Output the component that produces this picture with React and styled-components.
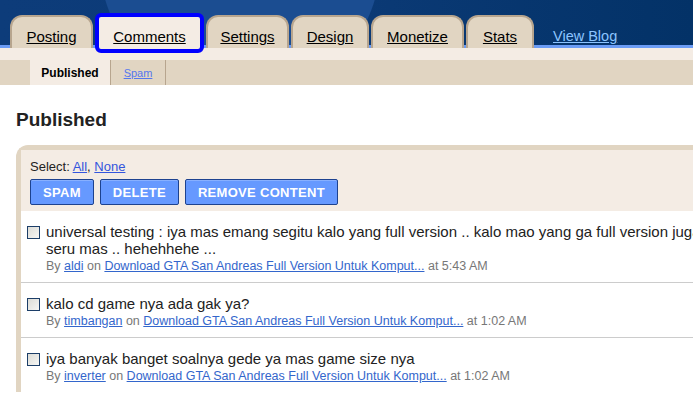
import React from "react";
import styled, { createGlobalStyle } from "styled-components";

const GlobalStyle = createGlobalStyle`
  html, body {
    margin: 0;
    padding: 0;
    background: #ffffff;
    font-family: "Liberation Sans", Arial, sans-serif;
    overflow: hidden;
  }
`;

// tab label + its width in the bar
const TABS = [
  { label: "Posting", w: 83 },
  { label: "Comments", w: 103, active: true },
  { label: "Settings", w: 83 },
  { label: "Design", w: 78 },
  { label: "Monetize", w: 93 },
  { label: "Stats", w: 68 },
];

// each comment is given as its visual lines (first one runs past the window)
const COMMENTS = [
  {
    lines: [
      "universal testing : iya mas emang segitu kalo yang full version .. kalo mao yang ga full version juga ada mas .. cuma ga",
      "seru mas .. hehehhehe ...",
    ],
    author: "aldi",
    time: "5:43 AM",
  },
  { lines: ["kalo cd game nya ada gak ya?"], author: "timbangan", time: "1:02 AM" },
  { lines: ["iya banyak banget soalnya gede ya mas game size nya"], author: "inverter", time: "1:02 AM" },
];

//* --------- header ---------
const Header = styled.div`
  height: 48px;
  display: flex;
  align-items: flex-end;
  padding-left: 10px;
  gap: 2px;
  background:
    radial-gradient(circle at 240px -40px, #1b4d91 0, #1b4d91 140px, transparent 141px),
    linear-gradient(90deg, #0d3c7a 0%, #0b3a76 50%, #033267 100%);
  box-shadow: inset 0 -3px 0 #6b9cf5;
`;

const Tab = styled.a`
  box-sizing: border-box;
  width: ${(p) => p.$w}px;
  height: 33px;
  padding-top: 11px;
  text-align: center;
  background: #e1d5c2;
  border: 2px solid #b7a58e;
  border-bottom: none;
  border-radius: 12px 12px 0 0;
  color: #000;
  font-size: 15px;
  text-decoration: underline;
  white-space: nowrap;
`;

const ActiveTab = styled(Tab)`
  background: #f4ece4;
  border-color: #f4ece4;
  outline: 4px solid #0000ff;
  outline-offset: -1px;
  border-radius: 3px;
  height: 34px;
  margin: 0 3px -2px;
  padding-top: 10px;
`;

const ViewBlog = styled.a`
  color: #8cc4ff;
  font-size: 14.5px;
  text-decoration: underline;
  margin-left: 17px;
  padding-bottom: 4px;
`;

//* --------- sub nav ---------
const Strip = styled.div`
  height: 12px;
  background: #f4ece4;
`;

const SubBar = styled.div`
  height: 25px;
  background: #e1d5c2;
  display: flex;
  padding-left: 30px;
`;

const SubTab = styled.a`
  display: flex;
  align-items: center;
  justify-content: center;
  box-sizing: border-box;
  width: ${(p) => (p.$active ? "81px" : "55px")};
  background: ${(p) => (p.$active ? "#f4ece4" : "transparent")};
  border-right: 1px solid #b7a58e;
  font-size: ${(p) => (p.$active ? "12px" : "11px")};
  font-weight: ${(p) => (p.$active ? "bold" : "normal")};
  color: ${(p) => (p.$active ? "#000" : "#5577ee")};
  text-decoration: ${(p) => (p.$active ? "none" : "underline")};
`;

//* --------- main ---------
const Main = styled.div`
  padding: 0 0 0 16px;
`;

const Title = styled.h2`
  margin: 24px 0 14px;
  font-size: 19px;
  font-weight: bold;
  color: #222;
`;

const Panel = styled.div`
  border-top: 5px solid #e1d5c2;
  border-left: 5px solid #e1d5c2;
  border-top-left-radius: 12px;
`;

const Toolbar = styled.div`
  background: #f4ece4;
  padding: 9px 0 6px 9px;
  display: flex;
  flex-direction: column;
  gap: 5px;
`;

const SelectLine = styled.div`
  font-size: 13px;
  color: #222;
  a {
    color: #3355dd;
    text-decoration: underline;
  }
`;

const Buttons = styled.div`
  display: flex;
  gap: 6px;
`;

const Button = styled.button`
  height: 26px;
  padding: 0 12px;
  background: #6699ff;
  border: 1px solid #1d428f;
  border-radius: 2px;
  color: #fff;
  font-family: "Liberation Sans", Arial, sans-serif;
  font-size: 13px;
  font-weight: bold;
  letter-spacing: 0.3px;
  box-shadow: inset 0 1px 0 #88b0ff;
`;

const Row = styled.div`
  display: flex;
  gap: 6px;
  padding: 12px 0 9px 6px;
  border-bottom: 1px solid #cccccc;
  &:last-child {
    border-bottom: none;
  }
`;

const Check = styled.span`
  flex: none;
  width: 11px;
  height: 11px;
  margin-top: 3px;
  border: 1px solid #1c3e68;
  background: linear-gradient(135deg, #dcdcd6 0%, #f6f6f4 100%);
`;

const Body = styled.div`
  display: flex;
  flex-direction: column;
  gap: 2px;
  min-width: 0;
`;

const Text = styled.div`
  font-size: 15px;
  line-height: 17px;
  color: #222;
  white-space: nowrap;
`;

const Meta = styled.div`
  font-size: 12.5px;
  color: #777;
  white-space: nowrap;
  a {
    color: #3366cc;
    text-decoration: underline;
  }
`;

export default function App() {
  return (
    <>
      <GlobalStyle />
      <Header>
        {TABS.map((t) =>
          t.active ? (
            <ActiveTab key={t.label} $w={t.w}>
              {t.label}
            </ActiveTab>
          ) : (
            <Tab key={t.label} $w={t.w}>
              {t.label}
            </Tab>
          )
        )}
        <ViewBlog>View Blog</ViewBlog>
      </Header>
      <Strip />
      <SubBar>
        <SubTab $active>Published</SubTab>
        <SubTab>Spam</SubTab>
      </SubBar>
      <Main>
        <Title>Published</Title>
        <Panel>
          <Toolbar>
            <SelectLine>
              Select: <a>All</a>, <a>None</a>
            </SelectLine>
            <Buttons>
              <Button>SPAM</Button>
              <Button>DELETE</Button>
              <Button>REMOVE CONTENT</Button>
            </Buttons>
          </Toolbar>
          {COMMENTS.map((c, i) => (
            <Row key={i}>
              <Check />
              <Body>
                <Text>
                  {c.lines.map((l, j) => (
                    <div key={j}>{l}</div>
                  ))}
                </Text>
                <Meta>
                  By <a>{c.author}</a> on <a>Download GTA San Andreas Full Version Untuk Komput...</a> at {c.time}
                </Meta>
              </Body>
            </Row>
          ))}
        </Panel>
      </Main>
    </>
  );
}
